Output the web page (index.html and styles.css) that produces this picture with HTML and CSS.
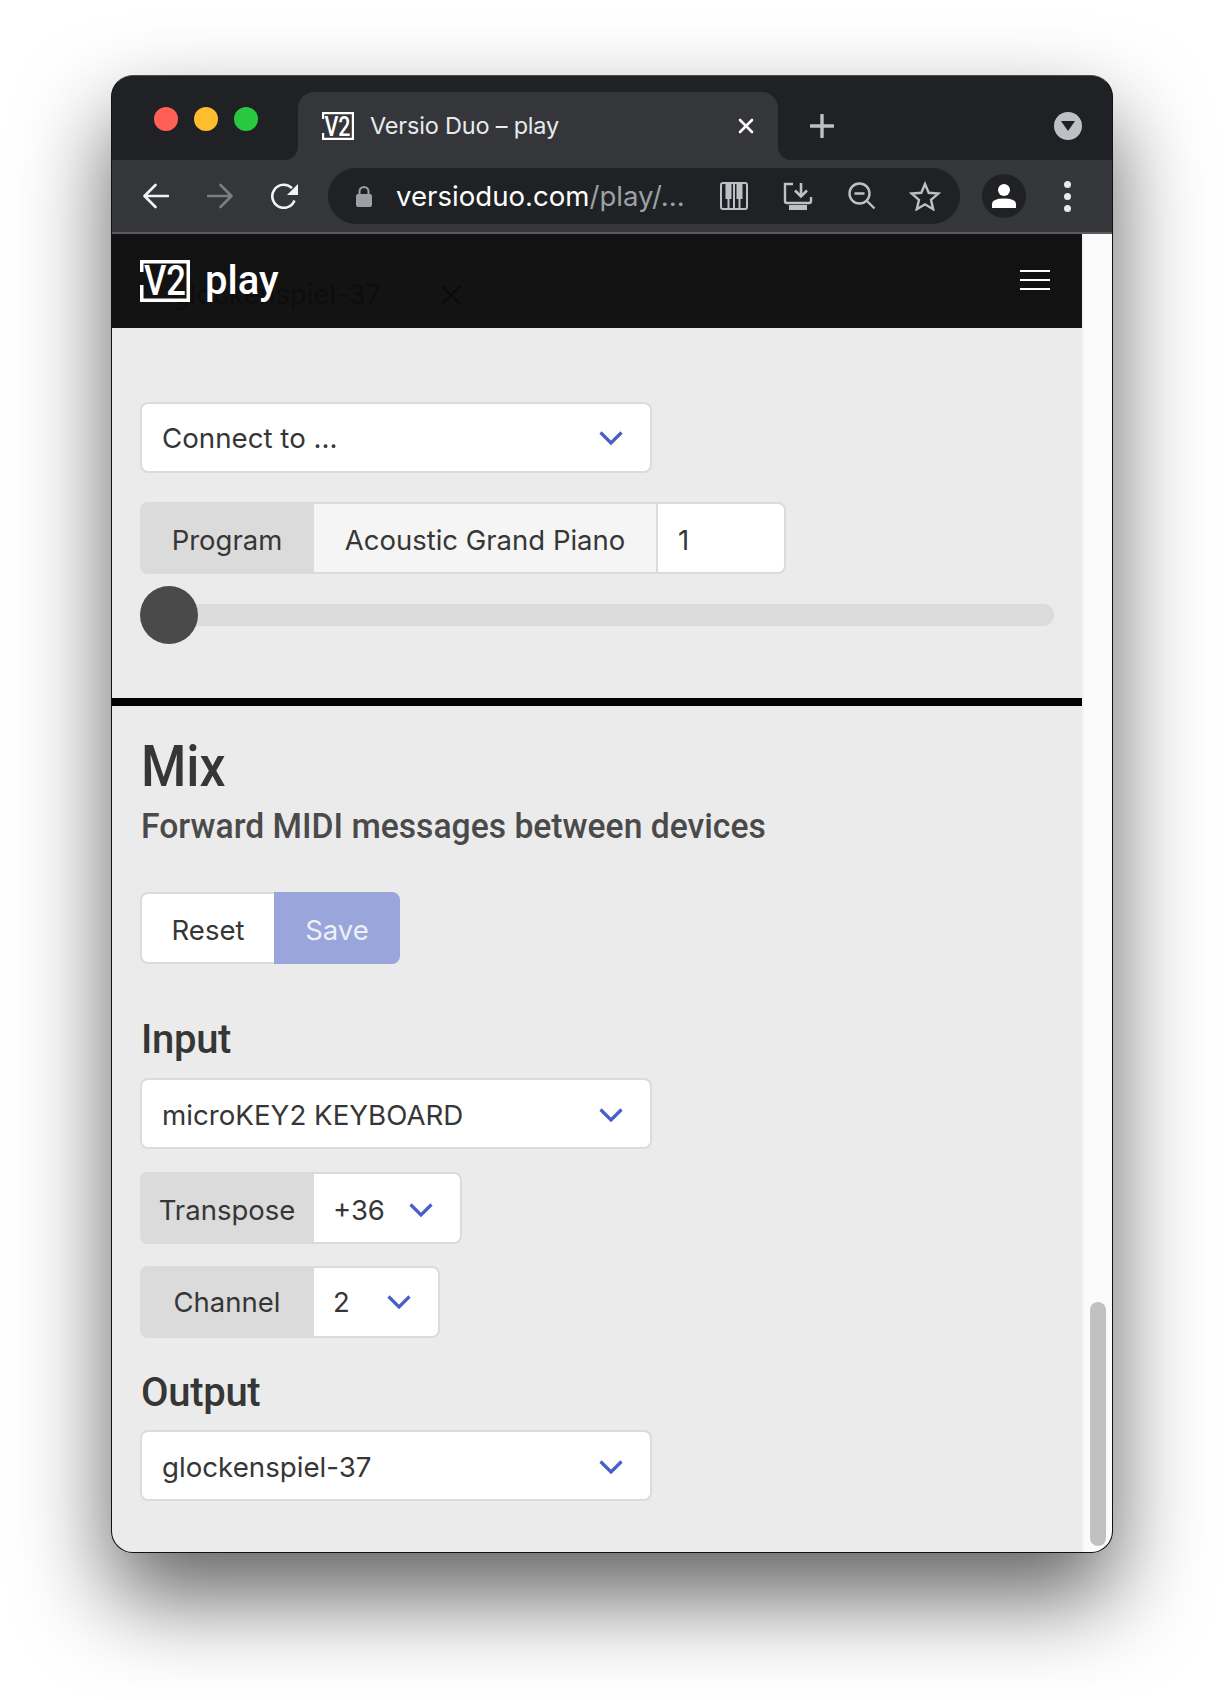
FILE: index.html
```html
<!DOCTYPE html>
<html lang="en">
  <head>
    <meta charset="UTF-8" />
    <meta name="viewport" content="width=device-width, initial-scale=1.0" />
    <title>Versio Duo - play</title>
    <link rel="stylesheet" href="styles.css">
  </head>
  <body>
    <div class="window">
      <div class="tabbar">
        <div class="lights">
          <span class="light red"></span>
          <span class="light yellow"></span>
          <span class="light green"></span>
        </div>
        <div class="tab">
          <svg class="favicon" width="32" height="28" viewBox="0 0 32 28">
            <path d="M1 7V1H31V27H1V21" fill="none" stroke="#fff" stroke-width="2.400" />
            <text x="15.5" y="23.500" textLength="26" lengthAdjust="spacingAndGlyphs" class="favicon-text">V2</text>
          </svg>
          <span class="tab-title">Versio Duo – play</span>
          <svg class="tab-close" width="16" height="16" viewBox="0 0 16 16">
            <path d="M2 2L14 14M14 2L2 14" stroke="#fff" stroke-width="2.6" stroke-linecap="round" />
          </svg>
        </div>
        <svg class="new-tab" width="24" height="24" viewBox="0 0 24 24">
          <path d="M12 1V23M1 12H23" stroke="#bdc1c6" stroke-width="3.4" stroke-linecap="round" />
        </svg>
        <div class="tab-search">
          <svg width="14" height="10" viewBox="0 0 14 10"><path d="M0 0H14L7 10Z" fill="#202124" /></svg>
        </div>
      </div>

      <div class="toolbar">
        <svg class="nav-icon" width="26" height="26" viewBox="0 0 26 26">
          <path d="M25 13H2M12.5 2L1.5 13L12.5 24" fill="none" stroke="#f1f3f4" stroke-width="2.6" stroke-linecap="round" stroke-linejoin="round" />
        </svg>
        <svg class="nav-icon" width="26" height="26" viewBox="0 0 26 26">
          <path d="M1 13H24M13.5 2L24.5 13L13.5 24" fill="none" stroke="#7c7d80" stroke-width="2.6" stroke-linecap="round" stroke-linejoin="round" />
        </svg>
        <svg class="nav-icon" width="28" height="26" viewBox="0 0 28 26">
          <path d="M23.5 17.5A11.5 11.5 0 1 1 21 5.2" fill="none" stroke="#f1f3f4" stroke-width="2.6" />
          <path d="M27 1V12H16Z" fill="#f1f3f4" />
        </svg>
        <div class="omnibox">
          <svg class="lock" width="16" height="21" viewBox="0 0 16 21">
            <path d="M3.5 9V5.5A4.5 4.5 0 0 1 12.500 5.500V9" fill="none" stroke="#9aa0a6" stroke-width="2" />
            <rect y="8" width="16" height="13" rx="2" fill="#9aa0a6" />
          </svg>
          <span class="url">versioduo.com<span class="url-path">/play/...</span></span>
          <svg class="omni-icon" width="28" height="28" viewBox="0 0 28 28">
            <rect x="1" y="1" width="26" height="26" rx="2" fill="none" stroke="#bdc1c6" stroke-width="2" />
            <path d="M14 1V27M8.500 17V27M19.500 17V27" fill="none" stroke="#bdc1c6" stroke-width="2" />
            <rect x="5.500" y="1" width="6" height="16" fill="#bdc1c6" />
            <rect x="16.500" y="1" width="6" height="16" fill="#bdc1c6" />
          </svg>
          <svg class="omni-icon" width="30" height="28" viewBox="0 0 30 28">
            <path d="M10 2H2V19Q2 21 4 21H26Q28 21 28 19V15" fill="none" stroke="#bdc1c6" stroke-width="2.400" />
            <path d="M18 1V14M12 8.500L18 14.500L24 8.500" fill="none" stroke="#bdc1c6" stroke-width="2.600" />
            <rect x="6" y="23" width="18" height="5" fill="#bdc1c6" />
          </svg>
          <svg class="omni-icon" width="28" height="28" viewBox="0 0 28 28">
            <circle cx="11.500" cy="11.500" r="10" fill="none" stroke="#bdc1c6" stroke-width="2.400" />
            <path d="M6.500 11.500H16.500M18.500 18.500L26.500 26.500" fill="none" stroke="#bdc1c6" stroke-width="2.400" />
          </svg>
          <svg class="omni-icon star" width="32" height="30" viewBox="0 0 32 30">
            <path d="M16 3L19.700 11.800L29.300 12.600L22 18.900L24.200 28.200L16 23.300L7.800 28.200L10 18.900L2.700 12.600L12.300 11.800Z" fill="none" stroke="#bdc1c6" stroke-width="2.400" />
          </svg>
        </div>
        <div class="avatar">
          <svg width="26" height="24" viewBox="0 0 26 24">
            <circle cx="13" cy="6" r="6" fill="#fff" />
            <path d="M1 24V20Q1 14.500 13 14.500T25 20V24Z" fill="#fff" />
          </svg>
        </div>
        <div class="kebab">
          <span></span><span></span><span></span>
        </div>
      </div>

      <div class="viewport">
        <main class="page">
          <nav class="navbar">
            <div class="toast">
              <span class="toast-text">glockenspiel-37</span>
              <svg class="toast-close" width="20" height="20" viewBox="0 0 20 20">
                <path d="M1 1L19 19M19 1L1 19" stroke="#0a0a0a" stroke-width="1.800" />
              </svg>
            </div>
            <svg class="logo" width="50" height="42" viewBox="0 0 50 42">
              <path d="M1.750 12V1.750H48.250V40.250H1.750V25" fill="none" stroke="#fff" stroke-width="3.500" />
              <text x="25" y="35" textLength="42" lengthAdjust="spacingAndGlyphs" class="logo-text">V2</text>
            </svg>
            <span class="brand">play</span>
            <div class="burger">
              <span></span><span></span><span></span>
            </div>
          </nav>

          <section class="connect">
            <div class="select wide">
              <span>Connect to ...</span>
              <svg class="chevron" width="24" height="14" viewBox="0 0 24 14"><path d="M1.500 1.500L12 12L22.500 1.500" /></svg>
            </div>
            <div class="group program">
              <span class="addon">Program</span>
              <span class="static">Acoustic Grand Piano</span>
              <span class="number">1</span>
            </div>
            <div class="slider">
              <div class="track"></div>
              <div class="thumb"></div>
            </div>
          </section>

          <section class="mix">
            <h1>Mix</h1>
            <p class="subtitle">Forward MIDI messages between devices</p>
            <div class="buttons">
              <button class="button reset">Reset</button>
              <button class="button save">Save</button>
            </div>

            <h2 class="input-title">Input</h2>
            <div class="select wide">
              <span>microKEY2 KEYBOARD</span>
              <svg class="chevron" width="24" height="14" viewBox="0 0 24 14"><path d="M1.500 1.500L12 12L22.500 1.500" /></svg>
            </div>
            <div class="group transpose">
              <span class="addon">Transpose</span>
              <div class="select inner">
                <span>+36</span>
                <svg class="chevron" width="24" height="14" viewBox="0 0 24 14"><path d="M1.500 1.500L12 12L22.500 1.500" /></svg>
              </div>
            </div>
            <div class="group channel">
              <span class="addon">Channel</span>
              <div class="select inner">
                <span>2</span>
                <svg class="chevron" width="24" height="14" viewBox="0 0 24 14"><path d="M1.500 1.500L12 12L22.500 1.500" /></svg>
              </div>
            </div>

            <h2 class="output-title">Output</h2>
            <div class="select wide">
              <span>glockenspiel-37</span>
              <svg class="chevron" width="24" height="14" viewBox="0 0 24 14"><path d="M1.500 1.500L12 12L22.500 1.500" /></svg>
            </div>
          </section>
        </main>
        <div class="gutter">
          <div class="scroll-thumb"></div>
        </div>
      </div>
    </div>
  </body>
</html>
```

FILE: styles.css
```css
* {
  box-sizing: border-box;
}

body {
  margin: 0;
  height: 1700px;
  padding: 75px 110px 0 111px;
  background-color: #fff;
  font-family: Inter, "Liberation Sans", sans-serif;
  overflow: hidden;
}

.window {
  width: 1002px;
  height: 1478px;
  display: flex;
  flex-direction: column;
  border: 1px solid #111;
  border-top-color: #4a4b4e;
  border-radius: 22px;
  overflow: hidden;
  background-color: #202124;
  box-shadow: 0 44px 90px rgba(0, 0, 0, 0.62);
}

/* chrome */

.tabbar {
  height: 84px;
  flex: none;
  display: flex;
  align-items: flex-end;
  background-color: #202124;
}

.lights {
  display: flex;
  gap: 16px;
  width: 186px;
  padding-left: 42px;
  align-self: flex-start;
  padding-top: 31px;
}

.light {
  width: 24px;
  height: 24px;
  border-radius: 50%;
}

.red {
  background-color: #ff5f57;
}

.yellow {
  background-color: #febc2e;
}

.green {
  background-color: #28c840;
}

.tab {
  position: relative;
  width: 480px;
  height: 68px;
  display: flex;
  align-items: center;
  padding: 0 24px;
  background-color: #35363a;
  border-radius: 16px 16px 0 0;
}

.tab::before,
.tab::after {
  content: '';
  position: absolute;
  bottom: 0;
  width: 14px;
  height: 14px;
}

.tab::before {
  left: -14px;
  background: radial-gradient(circle at 0 0, transparent 14px, #35363a 14.5px);
}

.tab::after {
  right: -14px;
  background: radial-gradient(circle at 100% 0, transparent 14px, #35363a 14.5px);
}

.favicon {
  flex: none;
}

.favicon-text {
  font-family: Roboto, sans-serif;
  font-weight: 500;
  font-size: 28px;
  fill: #fff;
  text-anchor: middle;
}

.tab-title {
  margin: 0 0 2px 16px;
  flex: 1;
  font-size: 23.5px;
  letter-spacing: -0.2px;
  color: #e8eaed;
}

.tab-close {
  flex: none;
}

.new-tab {
  margin: 0 0 22px 32px;
}

.tab-search {
  width: 28px;
  height: 28px;
  margin: 0 0 20px 220px;
  display: flex;
  align-items: center;
  justify-content: center;
  border-radius: 50%;
  background-color: #bdc1c6;
}

.toolbar {
  height: 74px;
  flex: none;
  display: flex;
  align-items: center;
  padding: 0 0 0 31px;
  gap: 38px;
  background-color: #35363a;
  border-bottom: 2px solid #5b5c5f;
}

.nav-icon {
  flex: none;
}

.omnibox {
  width: 632px;
  height: 56px;
  margin-left: -9px;
  display: flex;
  align-items: center;
  padding-left: 28px;
  background-color: #202124;
  border-radius: 28px;
}

.lock {
  flex: none;
}

.url {
  width: 324px;
  margin-left: 24px;
  font-size: 27.6px;
  color: #fff;
  white-space: nowrap;
}

.url-path {
  color: #9aa0a6;
}

.omni-icon {
  flex: none;
  margin-right: 35px;
}

.omni-icon.star {
  margin-right: 0;
  margin-left: -2px;
}

.avatar {
  width: 44px;
  height: 44px;
  flex: none;
  margin-left: -16px;
  display: flex;
  align-items: center;
  justify-content: center;
  border-radius: 50%;
  background-color: #202124;
}

.kebab {
  display: flex;
  flex-direction: column;
  gap: 5px;
  margin-left: 0;
}

.kebab span {
  width: 7px;
  height: 7px;
  border-radius: 50%;
  background-color: #e8eaed;
}

/* page */

.viewport {
  flex: 1;
  display: flex;
  min-height: 0;
}

.page {
  width: 970px;
  background-color: #ebebeb;
  color: #363636;
}

.navbar {
  position: relative;
  height: 94px;
  display: flex;
  align-items: center;
  padding: 5px 32px 0 28px;
  background-color: #121212;
}

.toast {
  position: absolute;
  left: 28px;
  top: 36px;
  width: 352px;
  height: 58px;
  display: flex;
  align-items: center;
  padding: 0 33px 10px;
  background-color: #131313;
  font-size: 27.5px;
  color: #0d0d0d;
}

.toast-close {
  position: absolute;
  right: 31px;
  top: 15px;
}

.logo {
  position: relative;
  margin-top: -5px;
}

.logo-text {
  font-family: Roboto, sans-serif;
  font-weight: 500;
  font-size: 42px;
  fill: #fff;
  text-anchor: middle;
}

.brand {
  position: relative;
  margin: -6px 0 0 15px;
  font-family: Roboto, sans-serif;
  font-weight: 500;
  font-size: 40px;
  color: #fff;
}

.burger {
  display: flex;
  flex-direction: column;
  gap: 7px;
  margin: -7px 0 0 auto;
}

.burger span {
  width: 30px;
  height: 2px;
  background-color: #fff;
}

.connect {
  height: 378px;
  padding: 74px 0 0 28px;
  border-bottom: 8px solid #000;
}

.select {
  display: flex;
  align-items: center;
  justify-content: space-between;
  background-color: #fff;
  font-size: 27.7px;
}

.wide {
  width: 512px;
  height: 71px;
  padding: 0 27px 0 20px;
  border: 2px solid #dbdbdb;
  border-radius: 8px;
}

.chevron {
  flex: none;
  fill: none;
  stroke: #485fc7;
  stroke-width: 3.200;
}

.group {
  display: flex;
  height: 72px;
  font-size: 27.5px;
  border: 2px solid #dbdbdb;
  border-left: none;
  border-radius: 8px;
  background-color: #fff;
}

.addon {
  width: 174px;
  margin: -2px 0;
  padding-top: 4px;
  display: flex;
  align-items: center;
  justify-content: center;
  background-color: #dbdbdb;
  border-radius: 8px 0 0 8px;
}

.program {
  width: 646px;
  margin-top: 29px;
}

.static {
  width: 344px;
  padding-top: 4px;
  display: flex;
  align-items: center;
  justify-content: center;
  background-color: #f5f5f5;
  border-right: 2px solid #dbdbdb;
}

.number {
  display: flex;
  align-items: center;
  padding: 4px 0 0 20px;
}

.slider {
  position: relative;
  height: 58px;
  margin-top: 12px;
  width: 914px;
  display: flex;
  align-items: center;
}

.track {
  width: 100%;
  height: 22px;
  border-radius: 11px;
  background-color: #dbdbdb;
}

.thumb {
  position: absolute;
  left: 0;
  top: 0;
  width: 58px;
  height: 58px;
  border-radius: 50%;
  background-color: #4a4a4a;
}

.mix {
  padding: 0 0 0 28px;
}

h1 {
  margin: 28px 0 0 1px;
  font-family: Roboto, sans-serif;
  font-weight: 500;
  font-size: 57px;
  line-height: 66px;
  transform: scaleX(0.91);
  transform-origin: left;
}

.subtitle {
  margin: 5px 0 0 1px;
  font-family: Roboto, sans-serif;
  font-weight: 500;
  font-size: 35px;
  line-height: 44px;
  color: #4a4a4a;
  transform: scaleX(0.962);
  transform-origin: left;
}

.buttons {
  display: flex;
  margin-top: 43px;
}

.button {
  height: 72px;
  padding: 4px 0 0;
  font-family: inherit;
  font-size: 27.5px;
  border: 2px solid #dbdbdb;
}

.reset {
  width: 134px;
  background-color: #fff;
  color: #363636;
  border-right: none;
  border-radius: 8px 0 0 8px;
}

.save {
  width: 126px;
  background-color: #9aa5db;
  color: #eef0f9;
  border-color: #9aa5db;
  border-radius: 0 8px 8px 0;
}

h2 {
  margin: 0 0 0 1px;
  font-family: Roboto, sans-serif;
  font-weight: 500;
  font-size: 40px;
  line-height: 50px;
  letter-spacing: -0.3px;
}

.input-title {
  margin-top: 51px;
}

.output-title {
  margin-top: 30px;
}

h2 + .select {
  margin-top: 13px;
  padding-top: 3px;
}

.output-title + .select {
  margin-top: 12px;
}

.group.transpose {
  width: 322px;
  margin-top: 23px;
}

.group.channel {
  width: 300px;
  margin-top: 22px;
}

.channel .addon,
.channel .inner {
  padding-top: 0;
}

.inner {
  flex: 1;
  padding: 4px 27px 0 19px;
  font-size: 27.5px;
  border-radius: 0 8px 8px 0;
}

.gutter {
  flex: 1;
  padding: 1068px 6px 0 6px;
  background-color: #fbfbfb;
  border-left: 2px solid #f4f4f4;
}

.scroll-thumb {
  width: 16px;
  height: 244px;
  border-radius: 8px;
  background-color: #c1c1c1;
}
```
